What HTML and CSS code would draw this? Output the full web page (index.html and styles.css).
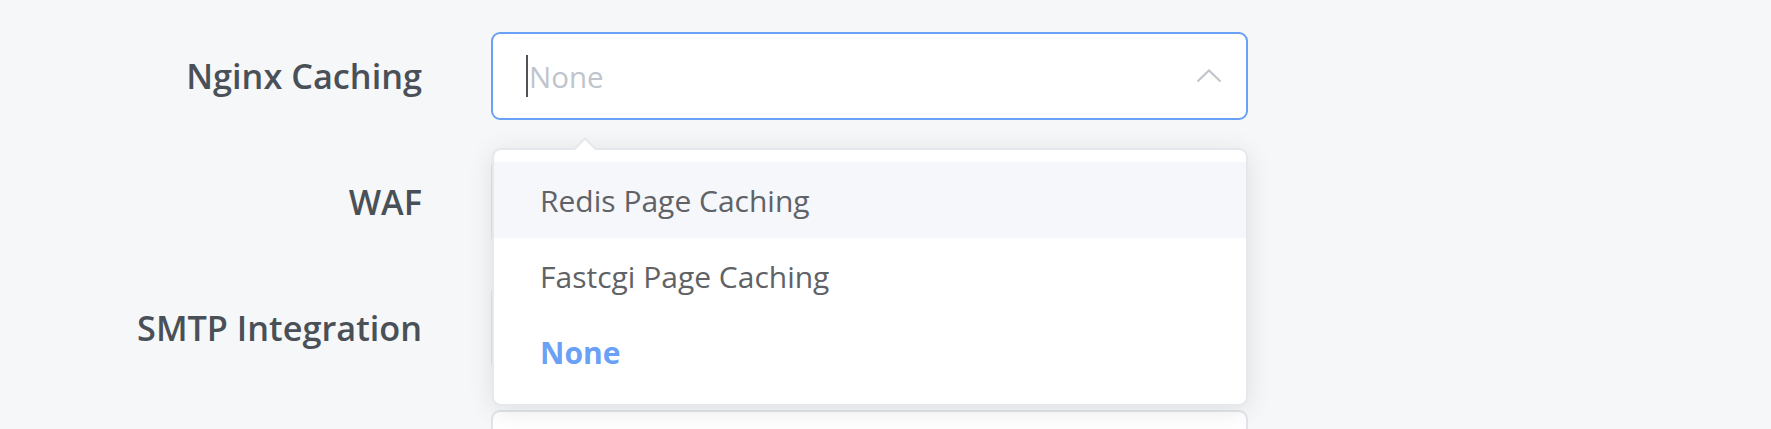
FILE: index.html
```html
<!DOCTYPE html>
<html>
<head>
    <title>Site Settings</title>
    <link rel="stylesheet" href="styles.css">
</head>
<body>
    <form class="settings-form">
        <div class="form-item">
            <label class="form-label">Nginx Caching</label>
            <div class="select is-focus">
                <div class="select-input">
                    <span class="caret"></span>
                    <span class="placeholder">None</span>
                </div>
                <svg class="select-arrow" width="26" height="14" viewBox="0 0 26 14">
                    <path d="M1.5 12.5 L13 1.5 L24.5 12.5" fill="none" stroke="#c0c4cc" stroke-width="2"/>
                </svg>

                <!-- open dropdown -->
                <div class="select-dropdown">
                    <ul class="dropdown-list">
                        <li class="dropdown-item hover">Redis Page Caching</li>
                        <li class="dropdown-item">Fastcgi Page Caching</li>
                        <li class="dropdown-item selected">None</li>
                    </ul>
                </div>
            </div>
        </div>

        <div class="form-item">
            <label class="form-label">WAF</label>
            <div class="select"></div>
        </div>

        <div class="form-item">
            <label class="form-label">SMTP Integration</label>
            <div class="select"></div>
        </div>

        <div class="form-item">
            <label class="form-label"></label>
            <div class="select"></div>
        </div>
    </form>
</body>
</html>
```

FILE: styles.css
```css
body {
    margin: 0;
    height: 100vh;
    background-color: #f6f7f9;
    font-family: "Open Sans", Arial, sans-serif;
    overflow: hidden;
}

.settings-form {
    display: flex;
    flex-direction: column;
    gap: 38px;
    padding-top: 32px;
}

.form-item {
    display: flex;
    align-items: center;
    gap: 69px;
    height: 88px;
    flex-shrink: 0;
}

.form-label {
    width: 422px;
    text-align: right;
    font-size: 34.3px;
    font-weight: 600;
    color: #4a5057;
    line-height: 88px;
}

.select {
    position: relative;
    box-sizing: border-box;
    width: 757px;
    height: 88px;
    display: flex;
    align-items: center;
    background-color: #fff;
    border: 2px solid #e1e4ea;
    border-radius: 9px;
}

.select.is-focus {
    border-color: #6aa0f5;
}

.select-input {
    flex: 1;
    display: flex;
    align-items: center;
    padding-left: 33px;
}

.caret {
    display: inline-block;
    width: 2px;
    height: 42px;
    background-color: #4f5357;
    margin-right: 1px;
}

.placeholder {
    font-size: 29.5px;
    color: #c0c4cc;
}

.select-arrow {
    margin-right: 24px;
}

.select-dropdown {
    position: absolute;
    top: 114px;
    left: -1px;
    right: -2px;
    z-index: 10;
    box-sizing: border-box;
    background-color: #fff;
    border: 2px solid #e6e8ed;
    border-radius: 9px;
    box-shadow: 0 4px 26px 0 rgba(0, 0, 0, 0.1);
    padding: 12px 0 14px;
}

/* popper arrow */
.select-dropdown::before,
.select-dropdown::after {
    content: "";
    position: absolute;
    left: 80px;
    width: 0;
    height: 0;
    border: 11px solid transparent;
    border-top-width: 0;
}

.select-dropdown::before {
    top: -13px;
    border-bottom: 11px solid #e6e8ed;
}

.select-dropdown::after {
    top: -10px;
    border-bottom: 11px solid #fff;
}

.dropdown-list {
    list-style: none;
    margin: 0;
    padding: 0;
}

.dropdown-item {
    height: 76px;
    line-height: 78px;
    padding: 0 46px;
    font-size: 30px;
    color: #606266;
    overflow: hidden;
}

.dropdown-item.hover {
    background-color: #f5f7fa;
}

.dropdown-item.selected {
    color: #6aa0f5;
    font-weight: 700;
}
```
